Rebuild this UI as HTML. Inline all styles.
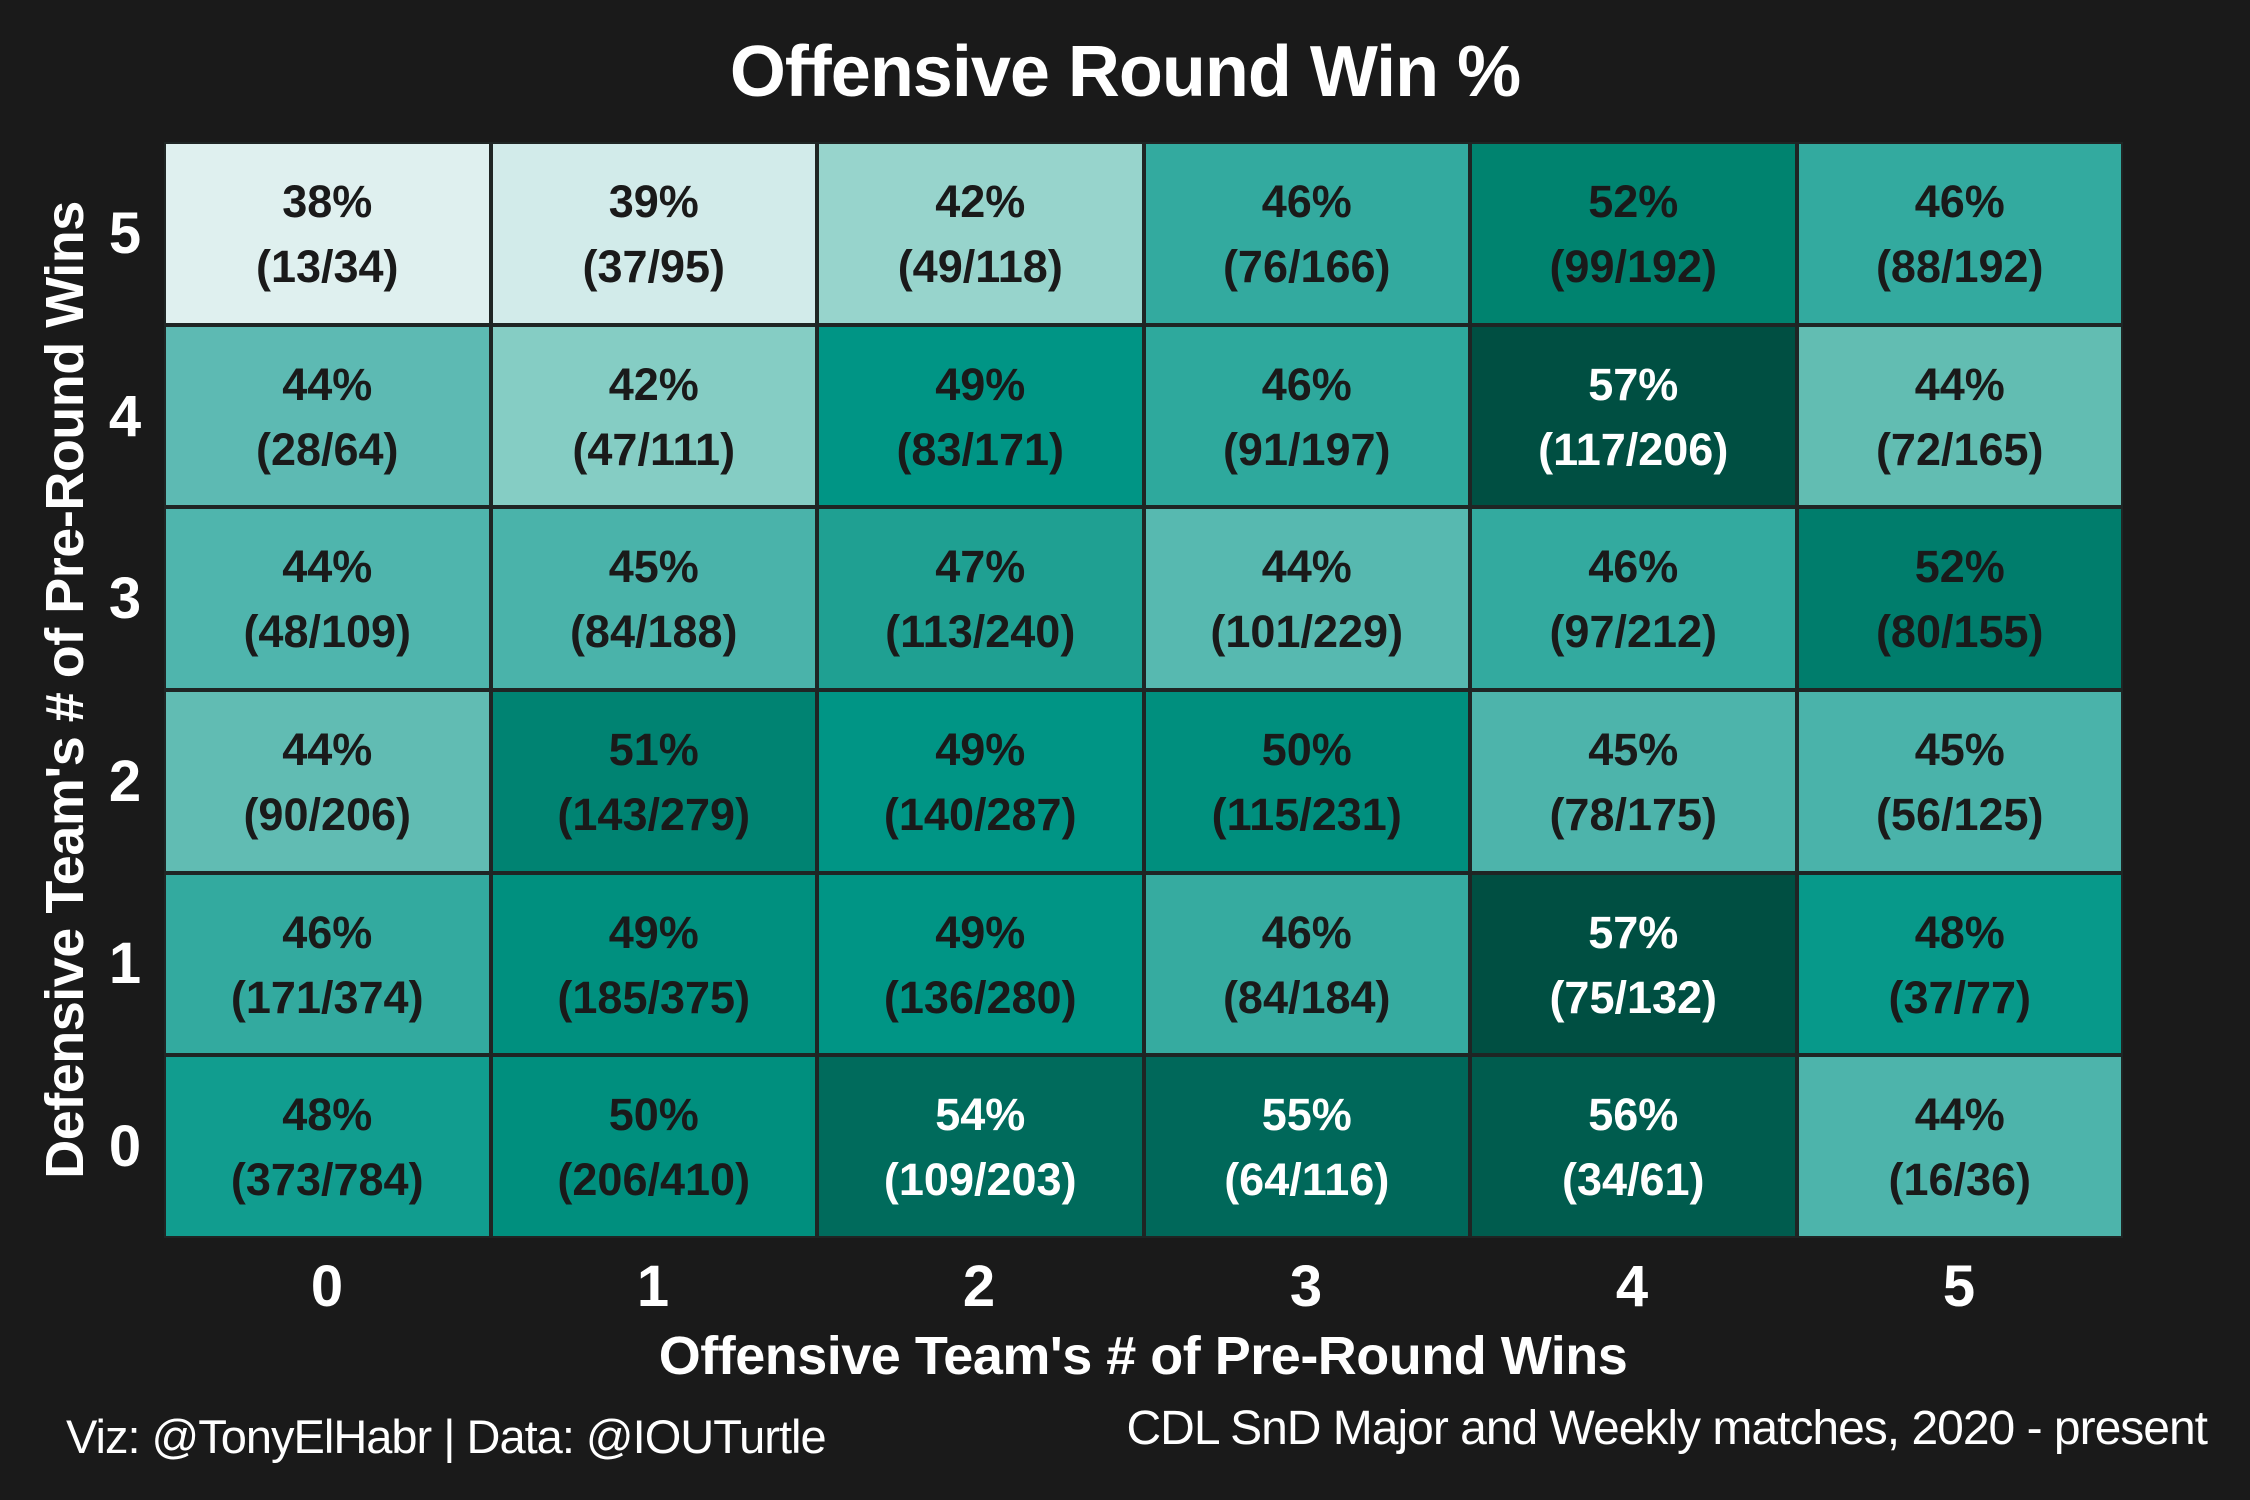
<!DOCTYPE html>
<html><head><meta charset="utf-8"><style>
body{margin:0;width:2250px;height:1500px;background:#1a1a1a;position:relative;overflow:hidden;font-family:"Liberation Sans",sans-serif;color:#fff}
.t{position:absolute;white-space:nowrap}
.grid{position:absolute;left:164px;top:142px;width:1959px;height:1096px;background:#1f2524;display:grid;grid-template-columns:repeat(6,1fr);grid-template-rows:repeat(6,1fr);gap:4px;padding:2px;box-sizing:border-box}
.c{position:relative;color:#1a1a1a;font-weight:bold;font-size:45px;text-align:center}
.c .p{position:absolute;left:0;right:0;top:32px}
.c .n{position:absolute;left:0;right:0;top:97px}
.w{color:#fff}
.ax{font-size:58px;font-weight:bold;text-align:center}
</style></head><body>
<div class="t" style="left:0;width:2250px;text-align:center;top:31px;font-size:72px;font-weight:bold;letter-spacing:-1px">Offensive Round Win %</div>
<div class="grid">
<div class="c" style="background:#dff0ef"><div class="p">38%</div><div class="n">(13/34)</div></div>
<div class="c" style="background:#d2ebea"><div class="p">39%</div><div class="n">(37/95)</div></div>
<div class="c" style="background:#97d4cc"><div class="p">42%</div><div class="n">(49/118)</div></div>
<div class="c" style="background:#33aa9f"><div class="p">46%</div><div class="n">(76/166)</div></div>
<div class="c" style="background:#00836f"><div class="p">52%</div><div class="n">(99/192)</div></div>
<div class="c" style="background:#33aa9f"><div class="p">46%</div><div class="n">(88/192)</div></div>

<div class="c" style="background:#5dbab3"><div class="p">44%</div><div class="n">(28/64)</div></div>
<div class="c" style="background:#85cdc4"><div class="p">42%</div><div class="n">(47/111)</div></div>
<div class="c" style="background:#009585"><div class="p">49%</div><div class="n">(83/171)</div></div>
<div class="c" style="background:#2ea99d"><div class="p">46%</div><div class="n">(91/197)</div></div>
<div class="c w" style="background:#004f42"><div class="p">57%</div><div class="n">(117/206)</div></div>
<div class="c" style="background:#62bdb2"><div class="p">44%</div><div class="n">(72/165)</div></div>

<div class="c" style="background:#4fb5ad"><div class="p">44%</div><div class="n">(48/109)</div></div>
<div class="c" style="background:#4ab3aa"><div class="p">45%</div><div class="n">(84/188)</div></div>
<div class="c" style="background:#1fa092"><div class="p">47%</div><div class="n">(113/240)</div></div>
<div class="c" style="background:#57b9b0"><div class="p">44%</div><div class="n">(101/229)</div></div>
<div class="c" style="background:#33aa9f"><div class="p">46%</div><div class="n">(97/212)</div></div>
<div class="c" style="background:#007d6c"><div class="p">52%</div><div class="n">(80/155)</div></div>

<div class="c" style="background:#61bcb3"><div class="p">44%</div><div class="n">(90/206)</div></div>
<div class="c" style="background:#008372"><div class="p">51%</div><div class="n">(143/279)</div></div>
<div class="c" style="background:#009585"><div class="p">49%</div><div class="n">(140/287)</div></div>
<div class="c" style="background:#008f7e"><div class="p">50%</div><div class="n">(115/231)</div></div>
<div class="c" style="background:#4db4ab"><div class="p">45%</div><div class="n">(78/175)</div></div>
<div class="c" style="background:#4ab3aa"><div class="p">45%</div><div class="n">(56/125)</div></div>

<div class="c" style="background:#33aa9f"><div class="p">46%</div><div class="n">(171/374)</div></div>
<div class="c" style="background:#00907f"><div class="p">49%</div><div class="n">(185/375)</div></div>
<div class="c" style="background:#009585"><div class="p">49%</div><div class="n">(136/280)</div></div>
<div class="c" style="background:#36aba0"><div class="p">46%</div><div class="n">(84/184)</div></div>
<div class="c w" style="background:#004f42"><div class="p">57%</div><div class="n">(75/132)</div></div>
<div class="c" style="background:#07998a"><div class="p">48%</div><div class="n">(37/77)</div></div>

<div class="c" style="background:#119d8f"><div class="p">48%</div><div class="n">(373/784)</div></div>
<div class="c" style="background:#008f7e"><div class="p">50%</div><div class="n">(206/410)</div></div>
<div class="c w" style="background:#006b5c"><div class="p">54%</div><div class="n">(109/203)</div></div>
<div class="c w" style="background:#00685a"><div class="p">55%</div><div class="n">(64/116)</div></div>
<div class="c w" style="background:#005c4e"><div class="p">56%</div><div class="n">(34/61)</div></div>
<div class="c" style="background:#4db4ab"><div class="p">44%</div><div class="n">(16/36)</div></div>
</div>
<div class="t ax" style="left:98px;top:200px;width:54px">5</div>
<div class="t ax" style="left:98px;top:383px;width:54px">4</div>
<div class="t ax" style="left:98px;top:565px;width:54px">3</div>
<div class="t ax" style="left:98px;top:748px;width:54px">2</div>
<div class="t ax" style="left:98px;top:930px;width:54px">1</div>
<div class="t ax" style="left:98px;top:1113px;width:54px">0</div>
<div class="t ax" style="left:277px;top:1253px;width:100px">0</div>
<div class="t ax" style="left:603px;top:1253px;width:100px">1</div>
<div class="t ax" style="left:929px;top:1253px;width:100px">2</div>
<div class="t ax" style="left:1256px;top:1253px;width:100px">3</div>
<div class="t ax" style="left:1582px;top:1253px;width:100px">4</div>
<div class="t ax" style="left:1909px;top:1253px;width:100px">5</div>
<div class="t" style="left:643px;width:1000px;text-align:center;top:1325px;font-size:54px;font-weight:bold;letter-spacing:-0.5px">Offensive Team's # of Pre-Round Wins</div>
<div class="t" style="left:65px;top:690px;width:1000px;text-align:center;font-size:54px;font-weight:bold;letter-spacing:-0.5px;transform:translate(-50%,-50%) rotate(-90deg)">Defensive Team's # of Pre-Round Wins</div>
<div class="t" style="left:66px;top:1409px;font-size:47px;letter-spacing:-1px">Viz: @TonyElHabr | Data: @IOUTurtle</div>
<div class="t" style="right:43px;top:1401px;font-size:48px;letter-spacing:-1px">CDL SnD Major and Weekly matches, 2020 - present</div>
</body></html>
